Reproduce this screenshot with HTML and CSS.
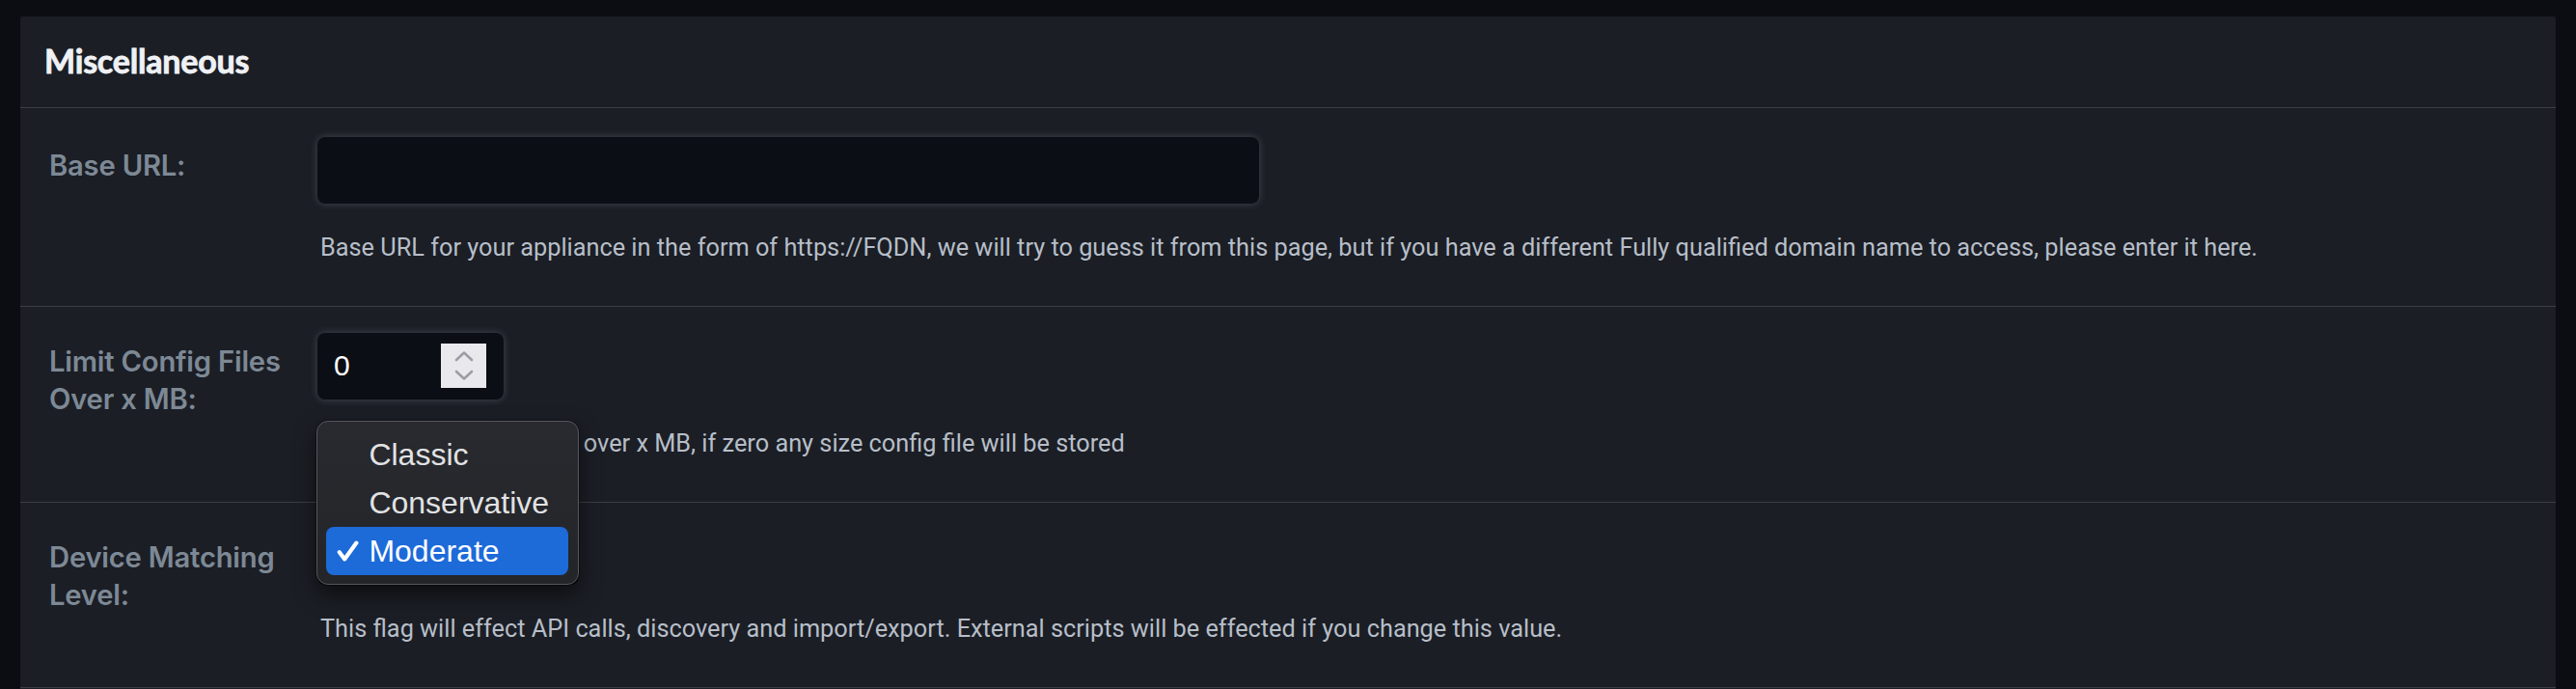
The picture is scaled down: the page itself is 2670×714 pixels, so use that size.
FILE: index.html
```html
<!DOCTYPE html>
<html lang="en">
<head>
<meta charset="utf-8">
<title>Miscellaneous</title>
<link rel="stylesheet" href="styles.css">
</head>
<body>
<section class="card">
  <header class="card-header">
    <h2 class="card-title">Miscellaneous</h2>
  </header>

  <div class="form-row form-row-first">
    <label class="form-label" for="base-url">Base URL:</label>
    <div class="form-control">
      <input class="text-input" id="base-url" type="text" value="">
      <p class="help">Base URL for your appliance in the form of https://FQDN, we will try to guess it from this page, but if you have a different Fully qualified domain name to access, please enter it here.</p>
    </div>
  </div>

  <div class="form-row">
    <label class="form-label">Limit Config Files Over x MB:</label>
    <div class="form-control">
      <div class="number-input">
        <span class="number-value">0</span>
        <span class="spinner">
          <svg width="47" height="46" viewBox="0 0 47 46" aria-hidden="true">
            <path d="M16 17 L24 9.5 L32 17" />
            <path d="M16 29 L24 36.5 L32 29" />
          </svg>
        </span>
      </div>
      <p class="help">Do not store config files over x MB, if zero any size config file will be stored</p>
    </div>
  </div>

  <div class="form-row">
    <label class="form-label">Device Matching Level:</label>
    <div class="form-control">
      <div class="select-wrap">
        <div class="select-box"></div>
        <ul class="select-menu">
          <li class="select-option"><span class="check"></span><span>Classic</span></li>
          <li class="select-option"><span class="check"></span><span>Conservative</span></li>
          <li class="select-option is-selected">
            <span class="check">
              <svg width="23" height="22" viewBox="0 0 23 22" aria-hidden="true"><path d="M2.8 12.2 L8.2 19.4 L20.4 2.6" /></svg>
            </span><span>Moderate</span>
          </li>
        </ul>
      </div>
      <p class="help">This flag will effect API calls, discovery and import/export. External scripts will be effected if you change this value.</p>
    </div>
  </div>
</section>
</body>
</html>
```
FILE: styles.css
```css
html {
  background: #0b0d12;
  overflow: hidden;
}

body {
  margin: 17px 21px 0;
  background: #0b0d12;
  overflow: hidden;
  font-family: "Roboto", "Liberation Sans", sans-serif;
}

.card {
  background: #1b1e25;
  border-radius: 6px;
  box-shadow: 0 0 6px 1px rgba(95, 100, 112, 0.35);
  padding-bottom: 60px;
}

.card-header {
  padding: 24.5px 25px 27.5px;
  border-bottom: 1px solid #3b3e45;
}

.card-title {
  margin: 0;
  font-family: "Lato", "Liberation Sans", sans-serif;
  font-weight: 700;
  font-size: 34px;
  line-height: 42px;
  letter-spacing: -0.2px;
  color: #eff1f4;
  -webkit-text-stroke: 0.8px #eff1f4;
}

.form-row {
  display: flex;
  align-items: flex-start;
  padding: 27px 0 41.6px 30px;
  border-bottom: 1px solid #3b3e45;
}

.form-row-first {
  padding-top: 30px;
}

.form-label {
  flex: none;
  width: 262px;
  margin: 11.3px 16px 0 0;
  font-family: "Inter", "Liberation Sans", sans-serif;
  font-weight: 600;
  font-size: 29.2px;
  line-height: 38.3px;
  letter-spacing: -0.2px;
  color: #7d8995;
}

.form-control {
  flex: 1;
  min-width: 0;
}

.text-input {
  display: block;
  box-sizing: border-box;
  width: 976px;
  height: 69px;
  margin: 0;
  padding: 0 17px;
  border: none;
  border-radius: 8px;
  background: #0b0e14;
  box-shadow: 0 0 7px 1px rgba(140, 146, 158, 0.28);
  color: #ffffff;
  font: 30px "Liberation Sans", sans-serif;
  outline: none;
}

.number-input {
  display: flex;
  align-items: center;
  justify-content: space-between;
  box-sizing: border-box;
  width: 193px;
  height: 69px;
  padding: 0 18px 0 17px;
  border-radius: 8px;
  background: #0b0e14;
  box-shadow: 0 0 7px 1px rgba(140, 146, 158, 0.28);
}

.number-value {
  font-family: "Liberation Sans", sans-serif;
  font-size: 30px;
  color: #ffffff;
  line-height: 1;
}

.spinner {
  display: block;
  width: 47px;
  height: 46px;
  background: #e9e9ed;
}

.spinner svg {
  display: block;
}

.spinner path {
  fill: none;
  stroke: #9d9da8;
  stroke-width: 2.6;
  stroke-linecap: round;
  stroke-linejoin: round;
}

.help {
  margin: 28.4px 0 0;
  padding-left: 3px;
  font-family: "Roboto", "Liberation Sans", sans-serif;
  font-size: 25.3px;
  line-height: 36px;
  color: #b7bec8;
  white-space: nowrap;
}

.select-wrap {
  position: relative;
  width: 271px;
  height: 58px;
}

.select-box {
  height: 58px;
  border-radius: 8px;
  background: #0b0e14;
}

.select-menu {
  position: absolute;
  top: -112px;
  left: -1px;
  z-index: 5;
  box-sizing: border-box;
  width: 272px;
  margin: 0;
  padding: 9px 10px 9px 9px;
  list-style: none;
  background: linear-gradient(#282a2f, #232529);
  border: 1px solid #55575d;
  border-radius: 12px;
  box-shadow: 0 10px 22px rgba(0, 0, 0, 0.55), 0 0 0 1px rgba(0, 0, 0, 0.35);
}

.select-option {
  display: flex;
  align-items: center;
  height: 50px;
  padding-left: 11px;
  border-radius: 8px;
  font-family: "Liberation Sans", sans-serif;
  font-size: 32px;
  line-height: 50px;
  color: #e1e2e4;
}

.select-option .check {
  flex: none;
  display: block;
  width: 23px;
  height: 22px;
  margin-right: 10.4px;
}

.select-option .check svg {
  display: block;
}

.select-option .check path {
  fill: none;
  stroke: #ffffff;
  stroke-width: 4.2;
  stroke-linecap: round;
  stroke-linejoin: round;
}

.select-option.is-selected {
  background: #1d6ad9;
  color: #ffffff;
}
```
